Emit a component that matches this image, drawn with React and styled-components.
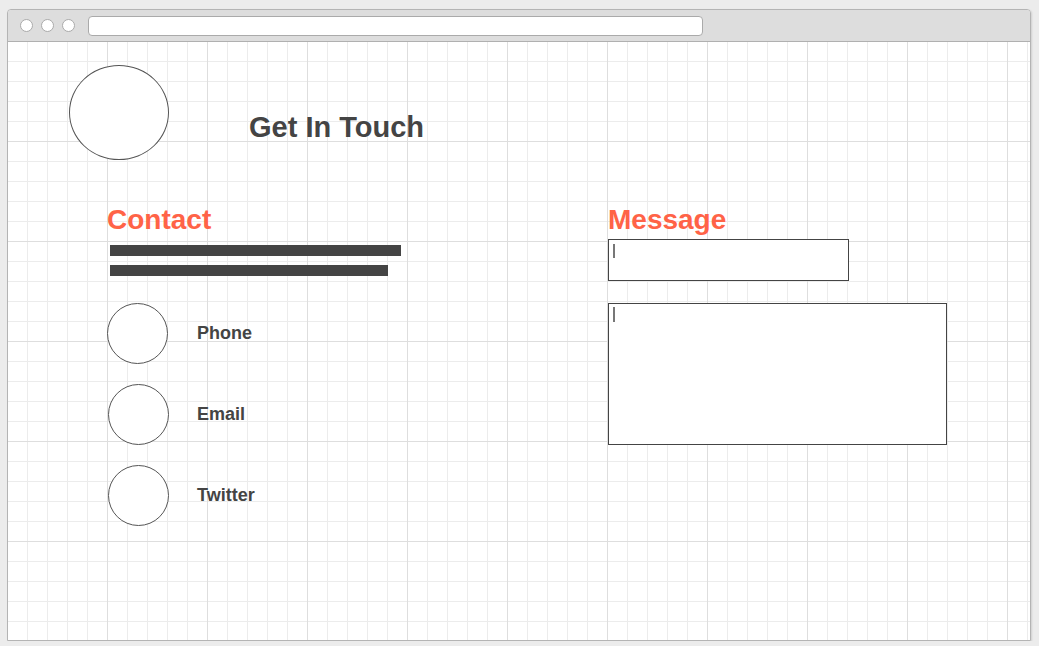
import styled, { createGlobalStyle } from "styled-components";

const GlobalStyle = createGlobalStyle`
  html, body {
    margin: 0;
    padding: 0;
    background: #ececec;
    font-family: "Liberation Sans", Arial, Helvetica, sans-serif;
  }
`;

const Window = styled.div`
  margin: 9px 0 0 7px;
  width: 1024px;
  height: 632px;
  box-sizing: border-box;
  border: 1px solid #b4b4b4;
  border-radius: 4px 4px 0 0;
  box-shadow: 1px 1px 2px rgba(0, 0, 0, 0.12);
  display: flex;
  flex-direction: column;
  overflow: hidden;
`;

const TitleBar = styled.div`
  height: 31px;
  flex-shrink: 0;
  background: #dddddd;
  border-bottom: 1px solid #b0b0b0;
  display: flex;
  align-items: center;
  padding-left: 12px;
  gap: 8px;
`;

const Dot = styled.span`
  width: 13px;
  height: 13px;
  box-sizing: border-box;
  border-radius: 50%;
  background: #fff;
  border: 1px solid #aaaaaa;
`;

const AddressBar = styled.div`
  margin-left: 5px;
  width: 615px;
  height: 20px;
  box-sizing: border-box;
  background: #fff;
  border: 1px solid #aaaaaa;
  border-radius: 4px;
`;

const Canvas = styled.div`
  flex: 1;
  background-color: #fff;
  background-image:
    linear-gradient(to right, transparent 99px, #dedede 99px, #dedede 100px),
    linear-gradient(to bottom, transparent 99px, #dedede 99px, #dedede 100px),
    linear-gradient(to right, transparent 19px, #ececec 19px, #ececec 20px),
    linear-gradient(to bottom, transparent 19px, #ececec 19px, #ececec 20px);
  background-size: 100px 100px, 100px 100px, 20px 20px, 20px 20px;
  padding: 23px 0 0 61px;
  color: #444;
`;

const Header = styled.header`
  display: flex;
  align-items: center;
  gap: 80px;
`;

const Avatar = styled.div`
  width: 100px;
  height: 95px;
  box-sizing: border-box;
  border: 1px solid #555;
  border-radius: 50%;
  background: #fff;
`;

const Title = styled.h1`
  margin: 29px 0 0;
  font-size: 29px;
  line-height: 32px;
  font-weight: 700;
  color: #444;
`;

const Columns = styled.div`
  display: grid;
  grid-template-columns: 501px 1fr;
  margin: 44px 0 0 38px;
`;

const Column = styled.section`
  display: flex;
  flex-direction: column;
`;

const Heading = styled.h2`
  margin: 0;
  font-size: 28px;
  line-height: 32px;
  font-weight: 700;
  color: #ff6347;
`;

const Bars = styled.div`
  display: flex;
  flex-direction: column;
  gap: 9px;
  margin: 9px 0 0 3px;
`;

const Bar = styled.div`
  height: 11px;
  width: ${(p) => p.$w}px;
  background: #444;
`;

const Links = styled.ul`
  list-style: none;
  margin: 27px 0 0;
  padding: 0;
  display: flex;
  flex-direction: column;
  gap: 20px;
`;

const LinkRow = styled.li`
  display: grid;
  grid-template-columns: 90px auto;
  align-items: center;
`;

const Icon = styled.div`
  width: 61px;
  height: 61px;
  box-sizing: border-box;
  margin-left: ${(p) => p.$shift || 0}px;
  border: 1px solid #555;
  border-radius: 50%;
  background: #fff;
`;

const Label = styled.span`
  font-size: 18px;
  font-weight: 700;
  color: #444;
`;

const Field = styled.div`
  margin-top: ${(p) => p.$top}px;
  width: ${(p) => p.$w}px;
  height: ${(p) => p.$h}px;
  box-sizing: border-box;
  border: 1px solid #444;
  background: #fff;
  padding: ${(p) => p.$pad}px 0 0 4px;
`;

const Caret = styled.span`
  display: block;
  width: 2px;
  height: ${(p) => p.$h}px;
  background: #777;
`;

export default function App() {
  const links = [
    { label: "Phone", shift: 0 },
    { label: "Email", shift: 1 },
    { label: "Twitter", shift: 1 },
  ];

  return (
    <>
      <GlobalStyle />
      <Window>
        <TitleBar>
          <Dot />
          <Dot />
          <Dot />
          <AddressBar />
        </TitleBar>
        <Canvas>
          <Header>
            <Avatar />
            <Title>Get In Touch</Title>
          </Header>
          <Columns>
            <Column>
              <Heading>Contact</Heading>
              <Bars>
                <Bar $w={291} />
                <Bar $w={278} />
              </Bars>
              <Links>
                {links.map((l) => (
                  <LinkRow key={l.label}>
                    <Icon $shift={l.shift} />
                    <Label>{l.label}</Label>
                  </LinkRow>
                ))}
              </Links>
            </Column>
            <Column>
              <Heading>Message</Heading>
              <Field $top={3} $w={241} $h={42} $pad={4}>
                <Caret $h={14} />
              </Field>
              <Field $top={22} $w={339} $h={142} $pad={3}>
                <Caret $h={15} />
              </Field>
            </Column>
          </Columns>
        </Canvas>
      </Window>
    </>
  );
}
